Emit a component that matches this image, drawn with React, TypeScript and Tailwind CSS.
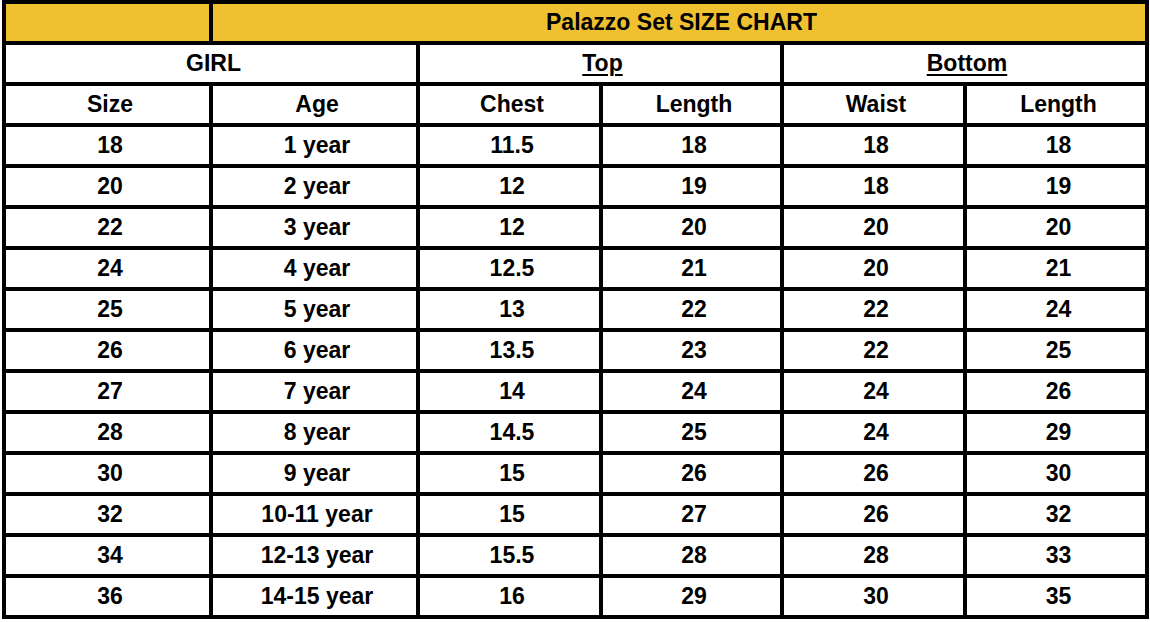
import React from "react";

const rows: string[][] = [
  ["18", "1 year", "11.5", "18", "18", "18"],
  ["20", "2 year", "12", "19", "18", "19"],
  ["22", "3 year", "12", "20", "20", "20"],
  ["24", "4 year", "12.5", "21", "20", "21"],
  ["25", "5 year", "13", "22", "22", "24"],
  ["26", "6 year", "13.5", "23", "22", "25"],
  ["27", "7 year", "14", "24", "24", "26"],
  ["28", "8 year", "14.5", "25", "24", "29"],
  ["30", "9 year", "15", "26", "26", "30"],
  ["32", "10-11 year", "15", "27", "26", "32"],
  ["34", "12-13 year", "15.5", "28", "28", "33"],
  ["36", "14-15 year", "16", "29", "30", "35"],
];

const cell = "bg-white flex items-center justify-center pl-[5px]";

export default function App() {
  return (
    <div className="w-[1150px] h-[622px] bg-white" style={{ fontFamily: '"Liberation Sans", Arial, sans-serif' }}>
      <div className="ml-[2px] w-[1147px] bg-black p-[4px] grid grid-cols-[203px_203px_179px_177px_179px_178px] auto-rows-[37px] gap-[4px] text-[23px] font-bold text-black leading-none">
        <div className="bg-[#efc130]" />
        <div className="bg-[#efc130] col-span-5 flex items-center justify-center pl-[5px]">Palazzo Set SIZE CHART</div>

        <div className={`${cell} col-span-2`}>GIRL</div>
        <div className={`${cell} col-span-2`}>
          <span className="underline decoration-2 underline-offset-[3px]">Top</span>
        </div>
        <div className={`${cell} col-span-2`}>
          <span className="underline decoration-2 underline-offset-[3px]">Bottom</span>
        </div>

        <div className={cell}>Size</div>
        <div className={cell}>Age</div>
        <div className={cell}>Chest</div>
        <div className={cell}>Length</div>
        <div className={cell}>Waist</div>
        <div className={cell}>Length</div>

        {rows.map((r, i) =>
          r.map((v, j) => (
            <div key={`${i}-${j}`} className={cell}>
              {v}
            </div>
          ))
        )}
      </div>
    </div>
  );
}
